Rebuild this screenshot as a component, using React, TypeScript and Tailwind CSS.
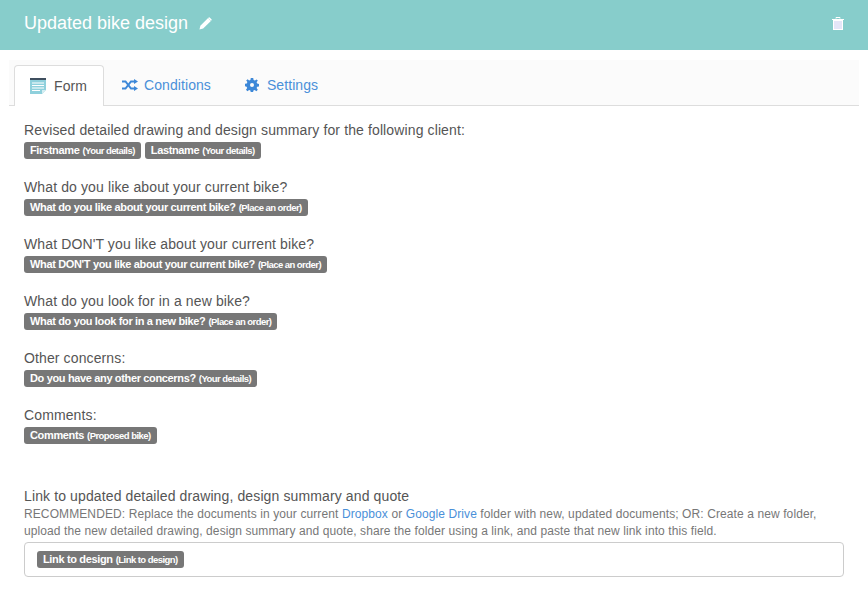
import React from "react";

function Badge({ name, src }: { name: string; src: string }) {
  return (
    <span className="inline-flex h-[17px] items-center whitespace-nowrap rounded-[3px] bg-[#777777] px-[6px] text-[11px] font-bold leading-none tracking-[-0.35px] text-white">
      {name}
      <span className="ml-[3px] text-[9.5px] tracking-[-0.55px]">({src})</span>
    </span>
  );
}

function Field({ label, children }: { label: string; children: React.ReactNode }) {
  return (
    <div className="h-[57px]">
      <div className="h-[22px] text-[14px] leading-[20px] tracking-[0.12px]">{label}</div>
      <div className="flex gap-[4px]">{children}</div>
    </div>
  );
}

function FormIcon() {
  return (
    <svg width="16" height="16" viewBox="0 0 16 16" className="shrink-0">
      <rect x="0" y="0" width="16" height="2" fill="#3f4f5f" />
      <path d="M0 2h16v10l-4 4H0z" fill="#8fd0dc" />
      <path d="M2 5h12M2 7.500h12M2 10h12M2 12.500h8" stroke="#fff" strokeWidth="1" />
      <path d="M12 16v-4h4z" fill="#d5eef2" />
    </svg>
  );
}

function ShuffleIcon() {
  return (
    <svg width="16" height="12" viewBox="0 0 16 12" fill="none" className="shrink-0">
      <path d="M0 2.500h3.500L9 9.500h3" stroke="#3d88d8" strokeWidth="2" />
      <path d="M0 9.500h3.500L9 2.500h3" stroke="#3d88d8" strokeWidth="2" />
      <path d="M12 0l4 2.500L12 5zM12 7l4 2.500L12 12z" fill="#3d88d8" />
    </svg>
  );
}

function GearIcon() {
  return (
    <svg width="14" height="14" viewBox="0 0 14 14" className="shrink-0">
      <g fill="#3d88d8">
        <path d="M5.800 0h2.400l.4 2 1.300.6L11.600 1.400l1.200 1.200-1.200 1.700.6 1.300 1.800.4v2.400l-1.800.4-.6 1.300 1.200 1.700-1.400 1.400-1.700-1.200-1.300.6-.4 1.900H5.800l-.4-1.900-1.300-.6-1.700 1.200-1.400-1.400 1.200-1.700-.6-1.300L0 8.200V5.800l1.800-.4.6-1.300L1.200 2.400l1.400-1.200 1.500 1.400 1.300-.6z" />
      </g>
      <circle cx="7" cy="7" r="2" fill="#fbfbfb" />
    </svg>
  );
}

function PencilIcon() {
  return (
    <svg width="13" height="13" viewBox="0 0 14 14" className="shrink-0">
      <path d="M0.500 13.500l1-4L9.800 1.200l3 3L4.500 12.500z" fill="#fff" />
      <path d="M10.500 .5l.7-.2 2.500 2.500-.2.700-.6.600-3-3z" fill="#fff" />
    </svg>
  );
}

function TrashIcon() {
  return (
    <svg width="12" height="14" viewBox="0 0 12 14" className="shrink-0">
      <path d="M4 1.500V.500h4v1" fill="none" stroke="#fff" />
      <rect x="0" y="2" width="12" height="1" fill="#fff" />
      <rect x="1" y="3" width="10" height="10" fill="#fff" />
      <path d="M3 4v8M5 4v8M7 4v8M9 4v8" stroke="#c9cdf0" strokeWidth="1" />
    </svg>
  );
}

export default function App() {
  return (
    <div className="h-[606px] w-[868px] overflow-hidden bg-white font-['Liberation_Sans',Arial,sans-serif] text-[#555555]">
      <header className="flex h-[50px] items-center justify-between bg-[#87cdcb] pb-[3px] pl-[24px] pr-[24px] text-white">
        <div className="flex items-center gap-[11px]">
          <span className="text-[18px]">Updated bike design</span>
          <PencilIcon />
        </div>
        <TrashIcon />
      </header>

      <nav className="ml-[9px] mr-[9px] mt-[10px] flex h-[46px] items-end border-b border-[#dddddd] bg-[#fbfbfb] pl-[5px] text-[14px] tracking-[0.08px]">
        <div className="-mb-px flex h-[41px] w-[90px] items-center gap-[8px] rounded-t-[4px] border border-b-0 border-[#dddddd] bg-white pl-[15px]">
          <FormIcon />
          <span>Form</span>
        </div>
        <div className="flex h-[40px] items-center gap-[6px] pl-[18px] text-[#4a90d9]">
          <ShuffleIcon />
          <span>Conditions</span>
        </div>
        <div className="flex h-[40px] items-center gap-[8px] pl-[34px] text-[#4a90d9]">
          <GearIcon />
          <span>Settings</span>
        </div>
      </nav>

      <main className="px-[24px] pt-[14px]">
        <Field label="Revised detailed drawing and design summary for the following client:">
          <Badge name="Firstname" src="Your details" />
          <Badge name="Lastname" src="Your details" />
        </Field>
        <Field label="What do you like about your current bike?">
          <Badge name="What do you like about your current bike?" src="Place an order" />
        </Field>
        <Field label="What DON'T you like about your current bike?">
          <Badge name="What DON'T you like about your current bike?" src="Place an order" />
        </Field>
        <Field label="What do you look for in a new bike?">
          <Badge name="What do you look for in a new bike?" src="Place an order" />
        </Field>
        <Field label="Other concerns:">
          <Badge name="Do you have any other concerns?" src="Your details" />
        </Field>
        <Field label="Comments:">
          <Badge name="Comments" src="Proposed bike" />
        </Field>

        <div className="mt-[24px] text-[14px] leading-[20px] tracking-[0.12px]">Link to updated detailed drawing, design summary and quote</div>
        <p className="text-[12px] leading-[17px] tracking-[0.1px] text-[#777777]">
          RECOMMENDED: Replace the documents in your current <span className="text-[#4a90d9]">Dropbox</span> or{" "}
          <span className="text-[#4a90d9]">Google Drive</span> folder with new, updated documents; OR: Create a new folder,
          <br />
          upload the new detailed drawing, design summary and quote, share the folder using a link, and paste that new link into this field.
        </p>
        <div className="mt-[2px] flex h-[35px] w-[820px] items-start rounded-[4px] border border-[#cccccc] pl-[12px] pt-[8px]">
          <Badge name="Link to design" src="Link to design" />
        </div>
      </main>
    </div>
  );
}
